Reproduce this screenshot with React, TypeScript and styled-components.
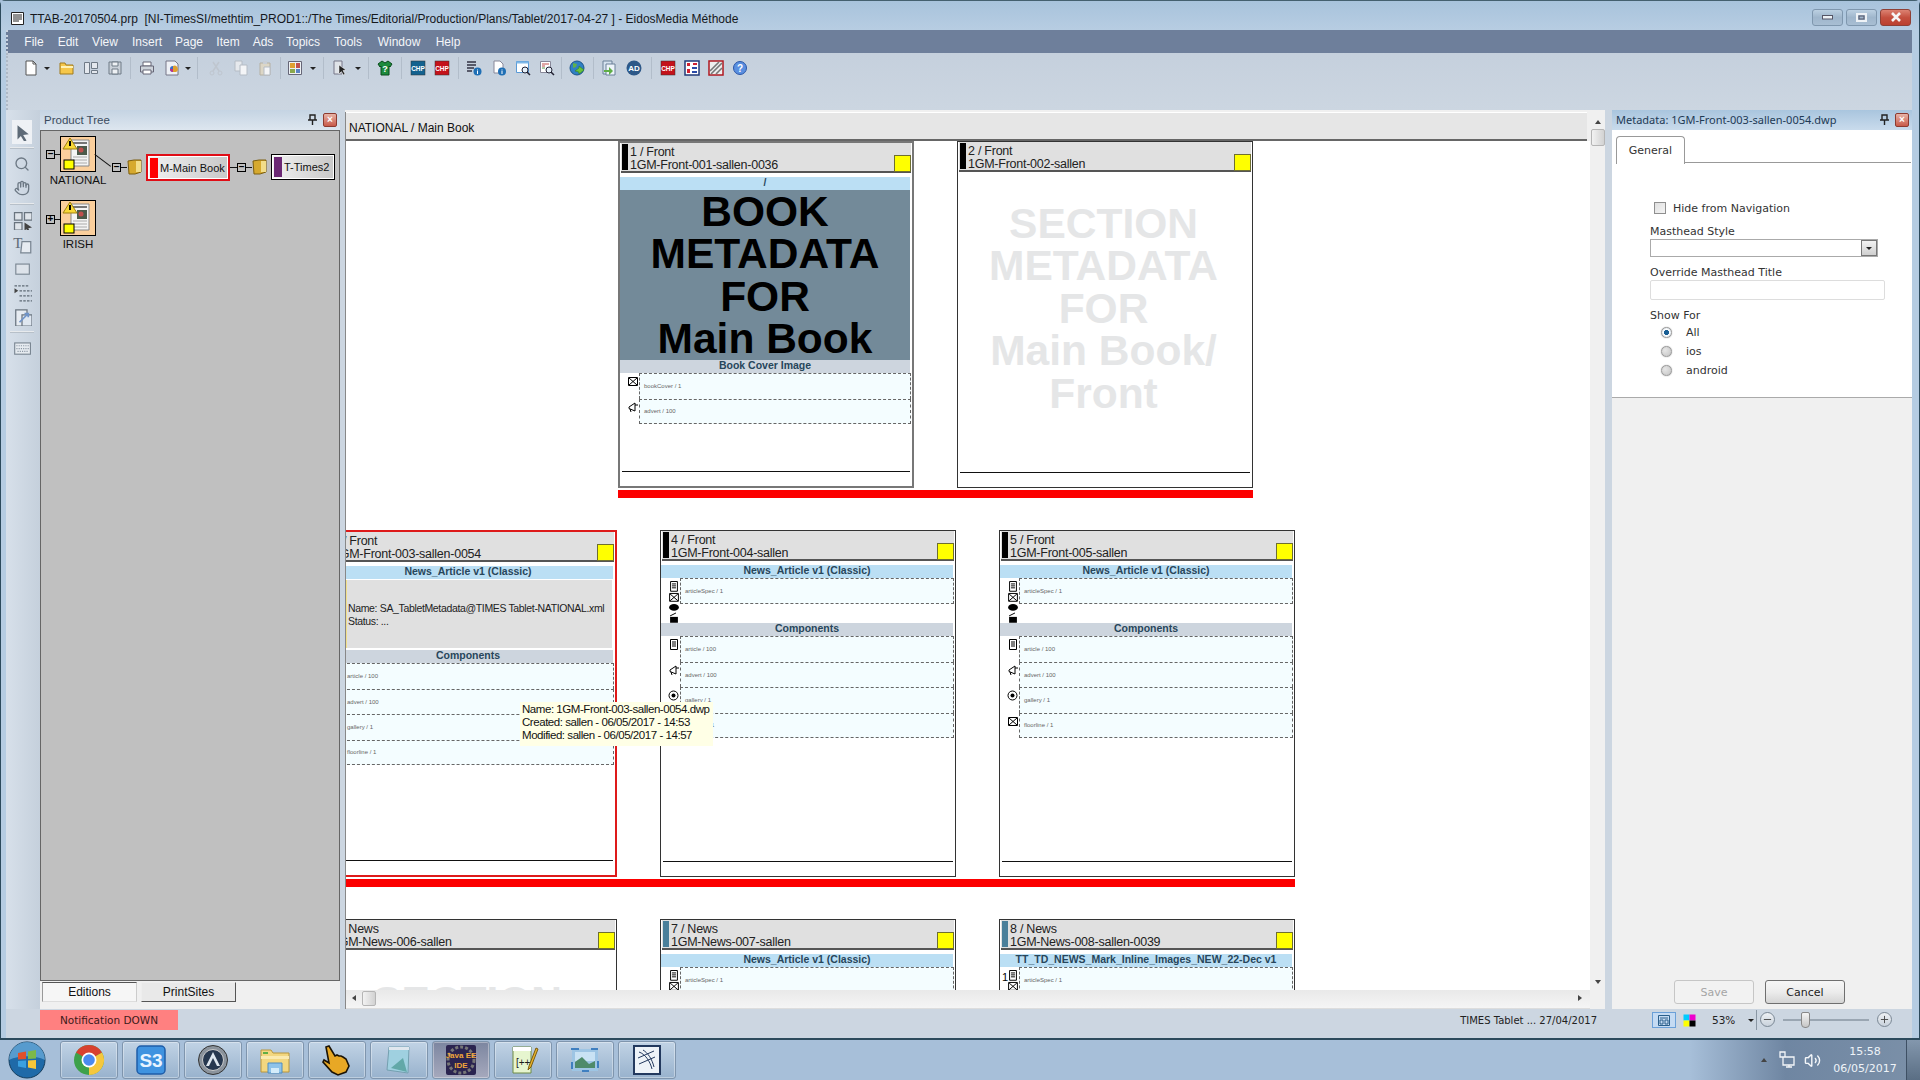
import React from 'react';
import styled, { createGlobalStyle } from 'styled-components';
import { Search, Hand, Minus, Plus, Volume2 } from 'lucide-react';

const Global = createGlobalStyle`
  html, body { margin: 0; padding: 0; width: 1920px; height: 1080px; overflow: hidden; background: #a7bfd9; }
  * { box-sizing: border-box; }
  body { font-family: "Liberation Sans", Arial, sans-serif; font-size: 12px; color: #111; }
`;

const Desktop = styled.div`width:1920px;height:1080px;display:flex;flex-direction:column;overflow:hidden;`;
const Win = styled.div`height:1040px;display:flex;flex-direction:column;background:#b5cce2;border:1px solid #2c4a5c;border-top-color:#44606f;border-bottom-width:2px;border-radius:5px 5px 0 0;`;
const TitleBar = styled.div`height:29px;flex:none;display:flex;align-items:center;padding:0 8px 0 9px;background:linear-gradient(#a8c3dc,#b7cde2);gap:5px;font-size:12px;white-space:pre;`;
const TitleText = styled.span`flex:1;color:#15181c;padding-top:7px;`;
const WinBtns = styled.div`display:flex;gap:3px;padding-top:3px;`;
const WinBtn = styled.div<{ $close?: boolean }>`width:31px;height:17px;border:1px solid ${p => (p.$close ? '#8f4036' : '#7f97ae')};border-radius:3px;display:flex;align-items:center;justify-content:center;background:${p => (p.$close ? 'linear-gradient(#dc8272,#c4503f 50%,#bb4030)' : 'linear-gradient(#bcd0e2,#9fb6cc 50%,#a8bed3)')};`;
const Inner = styled.div`flex:1;display:flex;flex-direction:column;margin:0 7px 0 5px;min-height:0;background:#ccd6e1;`;
const MenuBar = styled.div`height:23px;flex:none;background:#6e7f9b;display:flex;align-items:center;color:#f4f6f9;font-size:12px;padding-left:8px;border-left:2px dotted #c9d3df;`;
const MenuItem = styled.span<{ $w: number }>`width:${p => p.$w}px;text-align:center;`;
const ToolBar = styled.div`height:57px;flex:none;display:flex;align-items:flex-start;padding:3px 0 0 11px;border-left:2px dotted #aeb9c6;background:linear-gradient(#c5d0dd,#ccd6e1);`;
const Slot = styled.div<{ $w?: number }>`width:${p => p.$w ?? 24}px;height:24px;flex:none;display:flex;align-items:center;justify-content:center;`;
const Caret = styled.i`display:block;width:0;height:0;border:3px solid transparent;border-top:3px solid #222;border-bottom:0;`;
const VSep = styled.i`display:block;width:1px;height:22px;background:#b2bdca;`;
const Workspace = styled.div`flex:1;display:flex;min-height:0;`;
const Strip = styled.div`width:34px;flex:none;display:flex;flex-direction:column;align-items:center;padding:10px 2px 0 0;background:linear-gradient(90deg,#d7e0ea,#c5d0dc);`;
const StripBtn = styled.div<{ $h?: number; $on?: boolean }>`width:20px;height:${p => p.$h ?? 24}px;display:flex;align-items:center;justify-content:center;background:${p => (p.$on ? '#eef1f5' : 'transparent')};color:#6c7884;`;
const StripSep = styled.div`width:24px;height:2px;margin:3px 0;background:linear-gradient(#fff,#9fabb7);`;
const LeftPanel = styled.div`width:300px;flex:none;display:flex;flex-direction:column;`;
const PanelHead = styled.div`height:20px;flex:none;display:flex;align-items:center;padding:0 3px 1px 4px;gap:6px;font-size:11.5px;color:#3a4b5e;background:linear-gradient(#c5d4e3,#dde6ef);`;
const PanelTitle = styled.span`flex:1;white-space:nowrap;`;
const CloseSq = styled.div`width:14px;height:14px;border:1px solid #8d3a30;background:linear-gradient(#e7b3a7,#c95a49);border-radius:2px;color:#fff;font:bold 10px/12px "Liberation Sans",sans-serif;text-align:center;`;
const Tree = styled.div`flex:1;background:#c0c0c0;border:1px solid #666;position:relative;`;
const Expander = styled.div<{ $x: number; $y: number }>`position:absolute;left:${p => p.$x}px;top:${p => p.$y}px;width:9px;height:9px;border:1px solid #000;background:transparent;font:bold 10px/6px "Liberation Sans",sans-serif;text-align:center;color:#000;`;
const Wire = styled.div<{ $x: number; $y: number; $w: number; $r?: number }>`position:absolute;left:${p => p.$x}px;top:${p => p.$y}px;width:${p => p.$w}px;height:1px;background:#111;transform-origin:0 0;transform:rotate(${p => p.$r ?? 0}deg);`;
const Product = styled.div<{ $y: number }>`position:absolute;left:19px;top:${p => p.$y}px;width:36px;height:36px;border:1px solid #000;background:#fbcf9c;`;
const ProductLabel = styled.div<{ $y: number }>`position:absolute;left:6px;width:62px;top:${p => p.$y}px;text-align:center;font-size:11.5px;color:#111;`;
const NodeAt = styled.div<{ $x: number; $y: number }>`position:absolute;left:${p => p.$x}px;top:${p => p.$y}px;`;
const Edition = styled.div<{ $x: number; $w: number; $sel?: boolean; $c: string }>`position:absolute;left:${p => p.$x}px;top:23px;height:${p => (p.$sel ? 27 : 26)}px;width:${p => p.$w}px;border:${p => (p.$sel ? '2px solid #e00d16' : '1px solid #000')};box-shadow:inset 0 0 0 1px #fff;background:linear-gradient(90deg,#f2f2f2,#c8c8c8);display:flex;align-items:center;padding-left:2px;gap:2px;font-size:11px;white-space:nowrap;&::before{content:"";display:block;width:8px;height:20px;background:${p => p.$c};flex:none;}`;
const BottomTabs = styled.div`height:28px;flex:none;background:#f0f0f0;display:flex;gap:4px;padding:1px 0 0 2px;`;
const BTab = styled.div<{ $on?: boolean }>`width:95px;height:20px;display:flex;align-items:center;justify-content:center;font-size:12px;background:${p => (p.$on ? '#f6f6f6' : '#e9e9e9')};border:1px solid;border-color:${p => (p.$on ? '#555 #ccc #ddd #999' : '#eee #555 #555 #eee')};`;
const Center = styled.div`width:1260px;flex:none;margin-left:5px;display:flex;background:#f0f0f0;padding-top:2px;`;
const CenterCol = styled.div`flex:1;min-width:0;display:flex;flex-direction:column;border-left:1px solid #888;`;
const Crumb = styled.div`height:29px;flex:none;display:flex;align-items:center;padding:3px 0 0 3px;margin-right:3px;background:#e6e6e6;border-bottom:2px solid #666;border-top:1px solid #fff;font-size:12px;`;
const Canvas = styled.div`flex:1;min-height:0;background:#fff;overflow:hidden;position:relative;`;
const Pages = styled.div`margin-left:-25px;display:flex;flex-direction:column;`;
const Spread = styled.div<{ $ml?: number; $mb?: number }>`margin-left:${p => p.$ml ?? 0}px;margin-bottom:${p => p.$mb ?? 0}px;width:max-content;`;
const Cards = styled.div<{ $gap: number }>`display:flex;gap:${p => p.$gap}px;`;
const RedBar = styled.div`height:8px;background:#fc0000;margin-top:2px;`;
const Card = styled.div<{ $tone?: string }>`width:296px;height:347px;flex:none;display:flex;flex-direction:column;overflow:hidden;background:#fff;border:${p => (p.$tone === 'sel' ? '2px solid #de1a1a' : p.$tone === 'grey' ? '2px solid #777' : '1px solid #333')};`;
const CardHead = styled.div`height:30px;flex:none;margin:0 1px;background:#e0e0e0;border-bottom:2px solid #555;display:flex;padding:1px 0 0 1px;`;
const Stripe = styled.div<{ $c: string }>`width:6px;height:26px;flex:none;background:${p => p.$c};`;
const HeadText = styled.div`flex:1;padding:2px 0 0 2px;font-size:12.5px;letter-spacing:-.25px;line-height:13px;color:#222;white-space:nowrap;`;
const Flag = styled.div`width:17px;height:17px;flex:none;background:#ff0;border:1.5px solid #6f6f30;margin-top:11px;`;
const Band = styled.div<{ $top?: number; $tone?: string }>`height:13px;flex:none;margin:${p => p.$top ?? 4}px 2px 0 0;background:${p => (p.$tone === 'grey' ? '#cdd5de' : '#bbdff4')};color:#27465b;font-weight:bold;font-size:10.5px;line-height:10px;text-align:center;white-space:nowrap;overflow:hidden;`;
const CoverImage = styled.div`height:170px;flex:none;margin-right:2px;background:#738a99;color:#000;font-weight:bold;font-size:42.5px;line-height:42.4px;text-align:center;padding-top:1px;`;
const Placeholder = styled.div`margin:31px 3px 0 0;color:#e5e6e7;font-weight:bold;font-size:42.5px;line-height:42.4px;text-align:center;`;
const SlotRow = styled.div<{ $h?: number }>`display:flex;flex:none;height:${p => p.$h ?? 25.5}px;`;
const IconCol = styled.div`width:19px;flex:none;display:flex;flex-direction:column;align-items:center;padding:3px 0 0 6px;color:#000;position:relative;`;
const SlotBox = styled.div<{ $last?: boolean }>`flex:1;height:100%;margin-right:1px;background:#f4fdff;border:1px dashed #666;border-bottom:${p => (p.$last ? '1px dashed #666' : '0')};font-size:6px;color:#666;display:flex;align-items:center;padding-left:4px;white-space:nowrap;`;
const Split = styled.div`display:flex;height:45px;flex:none;`;
const SplitBox = styled.div`flex:1;height:26px;margin-right:1px;background:#f4fdff;border:1px dashed #666;font-size:6px;color:#666;display:flex;align-items:center;padding-left:4px;white-space:nowrap;`;
const SmallNum = styled.span`position:absolute;left:2px;top:4px;font-size:11px;`;
const Info = styled.div`height:68px;flex:none;margin:1px 3px 2px 22px;background:#e0e0e0;border-left:2px solid #f2e08a;padding:22px 0 0 1px;font-size:10.5px;letter-spacing:-.35px;line-height:13px;color:#222;white-space:nowrap;overflow:hidden;`;
const CardFoot = styled.div`margin:auto 2px 0;height:15px;border-top:1.5px solid #111;flex:none;`;
const Tip = styled.div`position:absolute;left:174px;top:561px;width:193px;height:44px;background:#ffffe6;padding:1px 0 0 2px;font-size:11.5px;letter-spacing:-.45px;line-height:13px;color:#111;white-space:nowrap;`;
const HScroll = styled.div`height:19px;flex:none;display:flex;align-items:center;padding:0 8px 2px 6px;background:linear-gradient(#e9e9e9,#f5f5f5);border-bottom:1px solid #ddd;`;
const ScrollThumb = styled.div<{ $w: number; $h: number }>`width:${p => p.$w}px;height:${p => p.$h}px;background:linear-gradient(90deg,#f2f2f2,#d2d2d2);border:1px solid #b5b5b5;border-radius:2px;flex:none;`;
const Tri = styled.i<{ $d: string }>`display:block;width:0;height:0;flex:none;border:3px solid transparent;${p => (p.$d === 'l' ? 'border-right:4px solid #444;border-left:0;' : p.$d === 'r' ? 'border-left:4px solid #444;border-right:0;' : p.$d === 'u' ? 'border-bottom:4px solid #444;border-top:0;' : 'border-top:4px solid #444;border-bottom:0;')}`;
const Spring = styled.div`flex:1;`;
const HGap = styled.div`flex:none;width:6px;`;
const VGap = styled.div`flex:none;height:5px;`;
const VScroll = styled.div`width:15px;flex:none;display:flex;flex-direction:column;align-items:center;padding:8px 0 25px;background:#f0f0f0;`;
const RightPanel = styled.div`width:300px;flex:none;margin-left:7px;display:flex;flex-direction:column;background:#f0f0f0;`;
const MetaHead = styled(PanelHead)`color:#1e3a55;font-family:"Noto Sans",sans-serif;font-size:11px;background:linear-gradient(#a9c5de,#c9dbec);`;
const Form = styled.div`height:268px;flex:none;background:#fff;border-bottom:1px solid #aaa;font-family:"DejaVu Sans",sans-serif;font-size:11px;color:#333;padding:6px 0 0 4px;display:flex;flex-direction:column;`;
const TabLine = styled.div`height:27px;flex:none;border-bottom:1px solid #999;margin-right:1px;`;
const FormTab = styled.div`width:69px;height:28px;border:1px solid #999;border-bottom:0;border-radius:4px 4px 0 0;background:#fff;display:flex;align-items:center;justify-content:center;color:#333;`;
const Fields = styled.div`padding:38px 0 0 34px;display:flex;flex-direction:column;`;
const Check = styled.div`width:12px;height:12px;border:1px solid #8f8f8f;background:linear-gradient(135deg,#e0e0e0,#f4f4f4);`;
const CheckRow = styled.div`display:flex;align-items:center;gap:7px;padding-left:4px;height:14px;margin-bottom:10px;`;
const FieldLabel = styled.div`height:14px;line-height:13px;`;
const Select = styled.div`width:228px;height:18px;border:1px solid #aaa;display:flex;justify-content:flex-end;margin-bottom:9px;`;
const SelectBtn = styled.div`width:16px;height:100%;background:linear-gradient(#f2f2f2,#cfcfcf);border:1px solid #777;display:flex;align-items:center;justify-content:center;`;
const TextInput = styled.div`width:235px;height:20px;border:1px solid #ddd;border-radius:2px;margin-bottom:9px;`;
const RadioRow = styled.div`display:flex;align-items:center;gap:14px;height:19px;padding-left:11px;`;
const Radio = styled.div<{ $on?: boolean }>`width:11px;height:11px;border-radius:50%;border:1px solid #9a9a9a;background:${p => (p.$on ? 'radial-gradient(circle,#1a5f95 0,#1a5f95 35%,#fff 45%,#cdd9e5 100%)' : 'radial-gradient(circle at 35% 35%,#e6e6e6,#c4c4c4)')};box-shadow:0 0 1px #777;`;
const FormActions = styled.div`margin-top:auto;display:flex;justify-content:flex-end;gap:11px;padding:0 67px 5px 0;`;
const Btn = styled.div<{ $off?: boolean }>`width:80px;height:24px;border:1px solid ${p => (p.$off ? '#c6c6c6' : '#6f6f6f')};border-radius:3px;display:flex;align-items:center;justify-content:center;font-family:"DejaVu Sans",sans-serif;font-size:11px;color:${p => (p.$off ? '#a5a5a5' : '#222')};background:${p => (p.$off ? '#f2f2f2' : 'linear-gradient(#f6f6f6,#ececec 50%,#d5d5d5)')};`;
const StatusBar = styled.div`height:29px;flex:none;display:flex;align-items:flex-start;padding:1px 0 0 34px;font-family:"DejaVu Sans",sans-serif;font-size:10px;color:#222;`;
const Notif = styled.div`width:138px;height:20px;background:#ff8080;display:flex;align-items:center;justify-content:center;color:#3b1a1a;font-size:10.5px;`;
const StatusText = styled.div`margin-left:auto;height:20px;display:flex;align-items:center;white-space:nowrap;`;
const ViewBtn = styled.div<{ $on?: boolean }>`width:24px;height:16px;margin:2px 0 0 ${p => (p.$on ? 55 : 1)}px;display:flex;align-items:center;justify-content:center;background:${p => (p.$on ? '#c5dbf3' : 'transparent')};border:1px solid ${p => (p.$on ? '#6ba0d8' : 'transparent')};`;
const Zoom = styled.div`margin-left:11px;width:33px;height:20px;display:flex;align-items:center;font-size:10.5px;`;
const ZoomCircle = styled.div`width:15px;height:15px;border-radius:50%;border:1px solid #7a8794;background:linear-gradient(#eef1f4,#c9d2dc);display:flex;align-items:center;justify-content:center;color:#444;flex:none;margin-top:2px;`;
const Slider = styled.div`width:86px;height:20px;margin:0 8px;display:flex;align-items:center;position:relative;&::before{content:"";display:block;width:100%;height:2px;background:#9aa6b2;}`;
const Thumb = styled.div`position:absolute;left:18px;top:2px;width:9px;height:16px;background:linear-gradient(#f4f4f4,#c6c6c6);border:1px solid #888;border-radius:2px 2px 4px 4px;`;
const Grip = styled.div`width:20px;height:20px;flex:none;`;
const CaretBox = styled.div`width:12px;height:20px;display:flex;align-items:center;justify-content:center;border-right:1px solid #8a97a4;margin-right:3px;`;
const Taskbar = styled.div`height:40px;flex:none;display:flex;align-items:center;gap:4px;padding-left:8px;background:linear-gradient(90deg,#a7bfd9 0,#a7bfd9 88%,#6f86a2 93%,#7b90a8 100%);`;
const Orb = styled.div`width:38px;height:38px;flex:none;margin-right:10px;`;
const TaskBtn = styled.div<{ $on?: boolean }>`width:58px;height:38px;flex:none;border:1px solid #7f95ad;border-radius:3px;display:flex;align-items:center;justify-content:center;background:${p => (p.$on ? 'linear-gradient(#7c86a0,#a6a9bd)' : 'linear-gradient(#c1d3e5,#98b2cd)')};box-shadow:inset 0 0 0 1px rgba(255,255,255,.35);`;
const Tray = styled.div`margin-left:auto;display:flex;align-items:center;height:100%;color:#f3f6f9;`;
const TrayIco = styled.div<{ $w: number }>`width:${p => p.$w}px;display:flex;justify-content:center;align-items:center;`;
const Clock = styled.div`width:82px;text-align:center;font-family:"DejaVu Sans",sans-serif;font-size:11px;line-height:17px;color:#eef3f8;white-space:nowrap;`;
const ShowDesk = styled.div`width:14px;height:100%;background:linear-gradient(#8397ad,#5a6e84);border-left:1px solid #3e5064;`;
const TitleGlyph = styled.div`display:flex;padding-top:6px;`;

type S = { s?: number };
const Svg = ({ s = 16, children }: S & { children: React.ReactNode }) => (
  <svg width={s} height={s} viewBox="0 0 16 16">{children}</svg>
);
const NewDoc = () => <Svg><path d="M3 1h7l3 3v11H3z" fill="#fff" stroke="#555" /><path d="M10 1v3h3" fill="none" stroke="#555" /></Svg>;
const Open = () => <Svg><path d="M1 3h5l1 2h7v9H1z" fill="#f6c74a" stroke="#a07a1c" /><path d="M2 6h12v2H2z" fill="#fff2b5" /></Svg>;
const Panes = () => <Svg><path d="M1.5 2.5h5v11h-5zM8.5 2.5h6v6h-6zM8.5 10.5h6v3h-6z" fill="#e4e8ee" stroke="#6f7a86" /></Svg>;
const Floppy = () => <Svg><path d="M2 2h12v12H2z" fill="#c9d0d8" stroke="#6f7a86" /><path d="M5 2h6v4H5zM5 9h6v5H5z" fill="#eef1f4" stroke="#6f7a86" /></Svg>;
const Printer = () => <Svg><path d="M4 2h8v4H4z" fill="#fff" stroke="#667" /><path d="M1.5 6h13v6h-13z" fill="#cdd3da" stroke="#667" /><path d="M4 10h8v4H4z" fill="#fff" stroke="#667" /></Svg>;
const Preview = () => <Svg><path d="M2 1h9l3 3v11H2z" fill="#eef1f6" stroke="#778" /><circle cx="9" cy="9" r="3" fill="#3a6cc4" /><path d="M9 6v6h3a3 3 0 0 0-3-6z" fill="#e0a030" /><path d="M6 9a3 3 0 0 0 3 3V9z" fill="#c0308a" /></Svg>;
const Cut = () => <Svg><path d="M5 2l6 9M11 2l-6 9" stroke="#bfc6cf" strokeWidth="1.5" fill="none" /><circle cx="4" cy="13" r="2" fill="none" stroke="#bfc6cf" /><circle cx="12" cy="13" r="2" fill="none" stroke="#bfc6cf" /></Svg>;
const Copy = () => <Svg><path d="M2 1h7v10H2z" fill="#e6e9ed" stroke="#b5bcc5" /><path d="M7 5h7v10H7z" fill="#f4f5f7" stroke="#b5bcc5" /></Svg>;
const Paste = () => <Svg><path d="M3 3h10v12H3z" fill="#dcd6c6" stroke="#b5b0a2" /><path d="M6 1h4v3H6z" fill="#c8ced6" /><path d="M7 7h6v8H7z" fill="#f4f5f7" stroke="#b5bcc5" /></Svg>;
const Tiles = () => <Svg><path d="M1.5 1.5h13v13h-13z" fill="#eef1f4" stroke="#667" /><path d="M3 3h5v5H3z" fill="#e0a030" /><path d="M9 3h4v5H9z" fill="#c0504d" /><path d="M3 9h5v4H3z" fill="#8aa84c" /><path d="M9 9h4v4H9z" fill="#5a82c4" /></Svg>;
const CursorDoc = () => <Svg><path d="M2 1h8v13H2z" fill="#dfe3e8" stroke="#778" /><path d="M7 5l7 5-3 .6 2 3.4-1.6 1-2-3.4L7 14z" fill="#222" stroke="#fff" strokeWidth=".5" /></Svg>;
const Shirt = () => <Svg><path d="M5 1L1 4l2 3 1-1v9h8V6l1 1 2-3-4-3-3 2z" fill="#1d8a3c" stroke="#0a4a1c" /><text x="8" y="12" fontSize="9" fontWeight="bold" fill="#fff" textAnchor="middle" fontFamily="Liberation Sans">?</text></Svg>;
const Chp = ({ c, s = 16 }: S & { c: string }) => <Svg s={s}><rect x="1" y="1" width="14" height="14" fill={c} stroke="#333" strokeWidth=".5" /><text x="8" y="10.5" fontSize="6.5" fontWeight="bold" fill="#fff" textAnchor="middle" fontFamily="Liberation Sans">CHP</text></Svg>;
const ListInfo = () => <Svg><path d="M1 2h9M1 5h9M1 8h7M1 11h5" stroke="#334" strokeWidth="1.4" /><circle cx="11.5" cy="11.5" r="4" fill="#1f6fb5" /><path d="M11.5 9.5v1M11.5 11v3" stroke="#fff" /></Svg>;
const PageInfo = () => <Svg><path d="M3 1h6l3 3v9H3z" fill="#fff" stroke="#889" /><circle cx="11" cy="11.5" r="4" fill="#1f6fb5" /><path d="M11 9.5v1M11 11v3" stroke="#fff" /></Svg>;
const WinFind = () => <Svg><path d="M1.5 1.5h12v11h-12z" fill="#fff" stroke="#5a9ad6" /><path d="M1.5 1.5h12v2h-12z" fill="#7fb8e8" /><circle cx="10" cy="10" r="3" fill="#e6f1fa" stroke="#223" /><path d="M12 12l3 3" stroke="#223" strokeWidth="1.5" /></Svg>;
const ListFind = () => <Svg><path d="M1.5 1.5h10v11h-10z" fill="#fff" stroke="#889" /><path d="M3 4h7M3 6h3" stroke="#c0504d" /><path d="M3 8h3" stroke="#5a9a4c" /><circle cx="10" cy="10" r="3" fill="#e6f1fa" stroke="#223" /><path d="M12 12l3 3" stroke="#223" strokeWidth="1.5" /></Svg>;
const Globe = () => <Svg><circle cx="8" cy="8" r="7" fill="#2f7fc4" stroke="#1c5488" /><path d="M4 3l4 1-1 3-3 1zM9 9l4-1-1 5-3 0z" fill="#5fb04a" /><path d="M6 11l4-3-0-2 5 4-5 4v-2z" fill="#69c23e" stroke="#2d7a1a" strokeWidth=".5" /></Svg>;
const DocGo = () => <Svg><path d="M2 1h9v13H2z" fill="#d6e2ef" stroke="#6a8098" /><path d="M5 4h9v11H5z" fill="#eef4fa" stroke="#6a8098" /><path d="M3 10h5V7l4 4-4 4v-3H3z" fill="#5fae46" /></Svg>;
const AdDisc = () => <Svg><circle cx="8" cy="8" r="7.5" fill="#2d5888" /><text x="8" y="11" fontSize="8" fontWeight="bold" fill="#fff" textAnchor="middle" fontFamily="Liberation Sans">AD</text></Svg>;
const GridRed = () => <Svg><rect x="1" y="1" width="14" height="14" fill="#fff" stroke="#223a78" strokeWidth="1.5" /><path d="M3 3h3v3H3zM9 3h4v2H9zM3 9h3v4H3z" fill="#d02030" /><path d="M8 7h5v2H8zM8 11h5v2H8z" fill="#2b4aa8" /></Svg>;
const Hatch = () => <Svg><rect x="1" y="1" width="14" height="14" fill="#eee" stroke="#b01820" strokeWidth="1.5" /><path d="M2 11l9-9M3 14l11-11M8 14l6-6" stroke="#777" strokeWidth="1.6" /></Svg>;
const Help = () => <Svg><circle cx="8" cy="8" r="6.5" fill="#5a8fe0" stroke="#2a56a8" /><text x="8" y="11.5" fontSize="10" fontWeight="bold" fill="#fff" textAnchor="middle" fontFamily="Liberation Sans">?</text></Svg>;

const Arrow = () => <Svg s={18}><path d="M4 2l10 8-5 .6 3 5-2 1-3-5-3 3z" fill="#5d6a77" /></Svg>;
const MultiSel = () => <Svg s={20}><path d="M2 2h6v6H2zM10 2h6v6h-6zM2 10h6v6H2z" fill="#dfe4ea" stroke="#69747f" /><path d="M10 10l6 4-3 .5 1.5 3-1.5.7-1.5-3-1.5 1.5z" fill="#444" /></Svg>;
const TextFrame = () => <Svg s={20}><path d="M8 6h7v9H7z" fill="#e6ebf1" stroke="#7a8692" /><text x="1" y="11" fontSize="12" fontFamily="Liberation Serif" fill="#5f6a75">T</text></Svg>;
const RectBox = () => <Svg s={18}><rect x="2.5" y="4.5" width="12" height="9" fill="#dde3ea" stroke="#7a8692" /></Svg>;
const ListFlow = () => <Svg s={20}><path d="M2 3h12M6 7h10M6 11h10M6 15h10" stroke="#5f6a75" strokeDasharray="2 1" /><path d="M2 5l3 2-3 2z" fill="#444" /></Svg>;
const Link2 = () => <Svg s={20}><path d="M3 3h9v13H3z" fill="#e7ecf2" stroke="#69747f" /><path d="M8 7h8v9H8z" fill="#dfe7f0" stroke="#69747f" /><path d="M6 13l7-7M10 6h3v3" stroke="#6f93c8" strokeWidth="1.4" fill="none" /></Svg>;
const Keys = () => <Svg s={18}><rect x="1.5" y="3.5" width="14" height="10" fill="#e6ebf0" stroke="#7a8692" /><path d="M3 6h11M3 8.5h11M4 11h9" stroke="#8a96a2" strokeDasharray="1 1" /></Svg>;

const ProdIcon = () => (
  <svg width="34" height="34" viewBox="0 0 34 34">
    <path d="M10 3h18v26H10z" fill="#f4f4f4" stroke="#888" />
    <path d="M12 5h14v2H12z" fill="#777" />
    <rect x="16" y="9" width="10" height="9" fill="#4c5a4a" />
    <circle cx="20" cy="13" r="2.5" fill="#c0504d" />
    <path d="M12 20h14M12 23h14M12 26h14" stroke="#aaa" />
    <path d="M2 12L9 1l7 11z" fill="#f8d838" stroke="#a08010" />
    <rect x="8" y="4" width="2" height="5" fill="#000" />
    <rect x="3" y="23" width="10" height="9" fill="#ff0" stroke="#000" />
  </svg>
);
const Book = () => (
  <svg width="15" height="16" viewBox="0 0 15 16">
    <path d="M1 2l6-1h7v12l-6 2H2z" fill="#d6a92e" stroke="#7c5e10" />
    <path d="M9 2h5v11H9z" fill="#f2dd8a" />
  </svg>
);

const DocG = () => <svg width="10" height="11" viewBox="0 0 10 11"><path d="M1.5.5h7v10h-7zM3 3h4M3 5h4M3 7h4" fill="none" stroke="#000" /></svg>;
const BoxX = () => <svg width="10" height="11" viewBox="0 0 10 11"><path d="M.5 1.5h9v8h-9zM1 2l8 7M9 2L1 9" fill="none" stroke="#000" /></svg>;
const Bubble = () => <svg width="10" height="10" viewBox="0 0 10 10"><ellipse cx="5" cy="4.5" rx="5" ry="3.5" fill="#000" /></svg>;
const Clap = () => <svg width="10" height="11" viewBox="0 0 10 11"><path d="M1 5h8v6H1z" fill="#000" /><path d="M1 4l6-3" stroke="#000" /></svg>;
const Horn = () => <svg width="10" height="11" viewBox="0 0 10 11"><path d="M1 5l6-4v8L1 6.5zM7 3h3M2 7l1 3" fill="#fff" stroke="#000" /></svg>;
const Gal = () => <svg width="11" height="11" viewBox="0 0 11 11"><circle cx="5.5" cy="5.5" r="4.5" fill="none" stroke="#000" /><circle cx="5.5" cy="5.5" r="2" fill="#000" /></svg>;

const Slots = ({ items }: { items: [React.ReactNode, string][] }) => (
  <>
    {items.map(([ico, label], i) => (
      <SlotRow key={label}>
        <IconCol>{ico}</IconCol>
        <SlotBox $last={i === items.length - 1}>{label}</SlotBox>
      </SlotRow>
    ))}
  </>
);
const comps: [React.ReactNode, string][] = [
  [<DocG />, 'article / 100'],
  [<Horn />, 'advert / 100'],
  [<Gal />, 'gallery / 1'],
  [<BoxX />, 'floorline / 1'],
];
const Head = ({ c, a, b }: { c: string; a: string; b: string }) => (
  <CardHead>
    <Stripe $c={c} />
    <HeadText>{a}<br />{b}</HeadText>
    <Flag />
  </CardHead>
);
const ArticleTop = ({ num }: { num?: boolean }) => (
  <Split>
    <IconCol>
      {num && <SmallNum>1</SmallNum>}
      <DocG /><BoxX /><Bubble /><Clap />
    </IconCol>
    <SplitBox>articleSpec / 1</SplitBox>
  </Split>
);
const ArticleCard = ({ a, b }: { a: string; b: string }) => (
  <Card>
    <Head c="#000" a={a} b={b} />
    <Band>News_Article v1 (Classic)</Band>
    <ArticleTop />
    <Band $top={0} $tone="grey">Components</Band>
    <Slots items={comps} />
    <CardFoot />
  </Card>
);

const toolbar: React.ReactNode[] = [
  <Slot key="a"><NewDoc /></Slot>, <Slot key="b" $w={8}><Caret /></Slot>, <Slot key="c" $w={4} />,
  <Slot key="d"><Open /></Slot>, <Slot key="e"><Panes /></Slot>, <Slot key="f"><Floppy /></Slot>,
  <Slot key="g" $w={7}><VSep /></Slot>, <Slot key="h" $w={26}><Printer /></Slot>, <Slot key="i"><Preview /></Slot>,
  <Slot key="j" $w={8}><Caret /></Slot>, <Slot key="k" $w={11}><VSep /></Slot>, <Slot key="l" $w={25}><Cut /></Slot>,
  <Slot key="m" $w={25}><Copy /></Slot>, <Slot key="n"><Paste /></Slot>, <Slot key="o" $w={6}><VSep /></Slot>,
  <Slot key="p"><Tiles /></Slot>, <Slot key="q" $w={12}><Caret /></Slot>, <Slot key="r" $w={9}><VSep /></Slot>,
  <Slot key="s"><CursorDoc /></Slot>, <Slot key="t" $w={12}><Caret /></Slot>, <Slot key="u" $w={9}><VSep /></Slot>,
  <Slot key="v"><Shirt /></Slot>, <Slot key="w" $w={9}><VSep /></Slot>, <Slot key="x"><Chp c="#13628f" /></Slot>,
  <Slot key="y"><Chp c="#c4121a" /></Slot>, <Slot key="z" $w={8}><VSep /></Slot>, <Slot key="aa"><ListInfo /></Slot>,
  <Slot key="ab" $w={25}><PageInfo /></Slot>, <Slot key="ac"><WinFind /></Slot>, <Slot key="ad" $w={23}><ListFind /></Slot>,
  <Slot key="ae" $w={7}><VSep /></Slot>, <Slot key="af"><Globe /></Slot>, <Slot key="ag" $w={8}><VSep /></Slot>,
  <Slot key="ah"><DocGo /></Slot>, <Slot key="ai" $w={25}><AdDisc /></Slot>, <Slot key="aj" $w={10}><VSep /></Slot>,
  <Slot key="ak"><Chp c="#c4121a" /></Slot>, <Slot key="al"><GridRed /></Slot>, <Slot key="am"><Hatch /></Slot>,
  <Slot key="an"><Help /></Slot>,
];
const menus: [string, number][] = [['File', 36], ['Edit', 32], ['View', 42], ['Insert', 42], ['Page', 42], ['Item', 36], ['Ads', 34], ['Topics', 46], ['Tools', 44], ['Window', 58], ['Help', 40]];

const ChromeIcon = () => (
  <svg width="32" height="32" viewBox="0 0 32 32">
    <circle cx="16" cy="16" r="15" fill="#3da14a" />
    <path d="M16 16L3 8.5A15 15 0 0 1 29 8.5z" fill="#d8412f" />
    <path d="M16 16L29 8.5A15 15 0 0 1 16 31z" fill="#f5c73d" />
    <circle cx="16" cy="16" r="7.5" fill="#fff" />
    <circle cx="16" cy="16" r="5.8" fill="#4a8af0" />
  </svg>
);
const S3Icon = () => (
  <svg width="30" height="30" viewBox="0 0 30 30"><rect x="1" y="1" width="28" height="28" rx="4" fill="#3f93e0" stroke="#1f5da8" strokeWidth="1.5" /><text x="15" y="22" fontSize="19" fontWeight="bold" fill="#e8f4ff" textAnchor="middle" fontFamily="Liberation Sans">S3</text></svg>
);
const AIcon = () => (
  <svg width="32" height="32" viewBox="0 0 32 32"><circle cx="16" cy="16" r="14.5" fill="#8b939c" stroke="#333" /><circle cx="16" cy="16" r="10.5" fill="#27384f" stroke="#ccc" /><path d="M16 8l7 14h-3l-4-8-4 8H9z" fill="#dfe7ef" /></svg>
);
const FolderIcon = () => (
  <svg width="32" height="32" viewBox="0 0 32 32"><path d="M2 6h10l2 3h16v19H2z" fill="#f3d780" stroke="#b9963c" /><path d="M4 8h5v2H4z" fill="#5fae46" /><path d="M2 12h28v3H2z" fill="#fbeab0" /><path d="M9 19h14v10H9z" fill="#8ec3ea" stroke="#4f8dc0" /><path d="M12 24h8v5h-8z" fill="#d4ecfa" /></svg>
);
const HandIcon = () => (
  <svg width="32" height="32" viewBox="0 0 32 32"><path d="M5 3l3-1 6 10 2-1 2 1 2 0 2 1 3 2 3 7-3 6-8 3-6-3-9-10 1-2 5 3z" fill="#e8a825" stroke="#1b1306" strokeWidth="1.6" /></svg>
);
const NoteIcon = () => (
  <svg width="32" height="32" viewBox="0 0 32 32"><path d="M6 3h20l-1 26-21-3z" fill="#9fd0e0" stroke="#74a0b0" /><path d="M6 3h20v3H6z" fill="#dfe7ee" /><path d="M8 24l12-10 4 14z" fill="#62a8a8" /></svg>
);
const JavaIcon = () => (
  <svg width="34" height="34" viewBox="0 0 34 34"><rect x="2" y="2" width="30" height="30" rx="2" fill="#2b2450" /><circle cx="17" cy="17" r="13" fill="none" stroke="#777" strokeWidth="3" strokeDasharray="3 2" /><text x="17" y="15" fontSize="8" fontWeight="bold" fill="#f0a63a" textAnchor="middle" fontFamily="Liberation Sans">Java EE</text><text x="17" y="25" fontSize="8" fontWeight="bold" fill="#f0a63a" textAnchor="middle" fontFamily="Liberation Sans">IDE</text></svg>
);
const NppIcon = () => (
  <svg width="32" height="32" viewBox="0 0 32 32"><path d="M6 3h18v26H6z" fill="#e6f5cf" stroke="#6f8a46" /><path d="M6 3h18v4H6z" fill="#fff" /><text x="9" y="22" fontSize="10" fill="#1a1a1a" fontFamily="Liberation Sans">[++</text><path d="M22 22L29 4l2 1-7 18-3 3z" fill="#e8b52c" stroke="#7a5a10" /></svg>
);
const PhotoIcon = () => (
  <svg width="32" height="32" viewBox="0 0 32 32"><rect x="3" y="5" width="26" height="22" fill="#9ec5e4" stroke="#3f7fc0" strokeWidth="2" strokeDasharray="7 12" /><path d="M6 8h20v9H6z" fill="#c9e2f4" /><path d="M6 24v-6l7-5 7 7 6-3v7z" fill="#4e8a6a" /></svg>
);
const AppIcon = () => (
  <svg width="30" height="32" viewBox="0 0 30 32"><rect x="2" y="2" width="26" height="28" fill="#eef3f8" stroke="#23395e" strokeWidth="2" /><path d="M7 8c6 2 11 9 13 17M11 6c5 3 9 9 11 17M6 14l16-7M7 20l16-7" stroke="#23395e" fill="none" /></svg>
);

export default function App() {
  return (
    <>
      <Global />
      <Desktop>
        <Win>
          <TitleBar>
            <TitleGlyph><svg width="15" height="15" viewBox="0 0 15 15"><path d="M1.5 1.5h12v12h-12z" fill="#fff" stroke="#222" /><path d="M3 4h9M3 6h9M3 8h9M3 10h6" stroke="#222" /></svg></TitleGlyph>
            <TitleText>TTAB-20170504.prp  [NI-TimesSI/methtim_PROD1::/The Times/Editorial/Production/Plans/Tablet/2017-04-27 ] - EidosMedia Méthode</TitleText>
            <WinBtns>
              <WinBtn><svg width="12" height="6" viewBox="0 0 12 6"><rect x=".5" y="1.5" width="10" height="3.5" fill="#eef2f6" stroke="#556" /></svg></WinBtn>
              <WinBtn><svg width="11" height="9" viewBox="0 0 11 9"><rect x="1" y="1" width="9" height="7" fill="none" stroke="#eef2f6" strokeWidth="2" /><rect x="3" y="3" width="5" height="3" fill="none" stroke="#556" /></svg></WinBtn>
              <WinBtn $close><svg width="12" height="10" viewBox="0 0 12 10"><path d="M2 1l8 8M10 1l-8 8" stroke="#f6f6f6" strokeWidth="2.6" /></svg></WinBtn>
            </WinBtns>
          </TitleBar>
          <Inner>
            <MenuBar>{menus.map(([m, w]) => <MenuItem key={m} $w={w}>{m}</MenuItem>)}</MenuBar>
            <ToolBar>{toolbar}</ToolBar>
            <Workspace>
              <Strip>
                <StripBtn $on><Arrow /></StripBtn>
                <StripSep />
                <StripBtn><Search size={16} /></StripBtn>
                <StripBtn><Hand size={16} /></StripBtn>
                <StripSep />
                <StripBtn><MultiSel /></StripBtn>
                <StripBtn><TextFrame /></StripBtn>
                <StripBtn><RectBox /></StripBtn>
                <StripBtn><ListFlow /></StripBtn>
                <StripBtn><Link2 /></StripBtn>
                <StripSep />
                <StripBtn><Keys /></StripBtn>
              </Strip>
              <LeftPanel>
                <PanelHead>
                  <PanelTitle>Product Tree</PanelTitle>
                  <svg width="9" height="11" viewBox="0 0 9 11"><path d="M2 1h5v5H2zM0 6h9M4.5 6v5" fill="none" stroke="#222" strokeWidth="1.4" /></svg>
                  <CloseSq>×</CloseSq>
                </PanelHead>
                <Tree>
                  <Expander $x={5} $y={19}>–</Expander>
                  <Wire $x={14} $y={23} $w={6} />
                  <Product $y={5}><ProdIcon /></Product>
                  <ProductLabel $y={43}>NATIONAL</ProductLabel>
                  <Wire $x={54} $y={23} $w={20} $r={37} />
                  <Expander $x={71} $y={32}>–</Expander>
                  <Wire $x={80} $y={36} $w={6} />
                  <NodeAt $x={86} $y={28}><Book /></NodeAt>
                  <Edition $x={105} $w={84} $sel $c="#f00">M-Main Book</Edition>
                  <Wire $x={189} $y={36} $w={7} />
                  <Expander $x={196} $y={32}>–</Expander>
                  <Wire $x={205} $y={36} $w={6} />
                  <NodeAt $x={211} $y={28}><Book /></NodeAt>
                  <Edition $x={230} $w={64} $c="#6b2874">T-Times2</Edition>
                  <Expander $x={5} $y={84}>+</Expander>
                  <Wire $x={14} $y={88} $w={5} />
                  <Product $y={69}><ProdIcon /></Product>
                  <ProductLabel $y={107}>IRISH</ProductLabel>
                </Tree>
                <BottomTabs>
                  <BTab $on>Editions</BTab>
                  <BTab>PrintSites</BTab>
                </BottomTabs>
              </LeftPanel>
              <Center>
                <CenterCol>
                  <Crumb>NATIONAL / Main Book</Crumb>
                  <Canvas>
                    <Pages>
                      <Spread $ml={297} $mb={32}>
                        <Cards $gap={43}>
                          <Card $tone="grey">
                            <Head c="#000" a="1 / Front" b="1GM-Front-001-sallen-0036" />
                            <Band>/</Band>
                            <CoverImage>BOOK<br />METADATA<br />FOR<br />Main Book</CoverImage>
                            <Band $top={0} $tone="grey">Book Cover Image</Band>
                            <Slots items={[[<BoxX />, 'bookCover / 1'], [<Horn />, 'advert / 100']]} />
                            <CardFoot />
                          </Card>
                          <Card>
                            <Head c="#000" a="2 / Front" b="1GM-Front-002-sallen" />
                            <Placeholder>SECTION<br />METADATA<br />FOR<br />Main Book/<br />Front</Placeholder>
                            <CardFoot />
                          </Card>
                        </Cards>
                        <RedBar />
                      </Spread>
                      <Spread $mb={32}>
                        <Cards $gap={43}>
                          <Card $tone="sel">
                            <Head c="#000" a="3 / Front" b="1GM-Front-003-sallen-0054" />
                            <Band>News_Article v1 (Classic)</Band>
                            <Info>Name: SA_TabletMetadata@TIMES Tablet-NATIONAL.xml<br />Status: ...</Info>
                            <Band $top={0} $tone="grey">Components</Band>
                            <Slots items={comps} />
                            <CardFoot />
                          </Card>
                          <ArticleCard a="4 / Front" b="1GM-Front-004-sallen" />
                          <ArticleCard a="5 / Front" b="1GM-Front-005-sallen" />
                        </Cards>
                        <RedBar />
                      </Spread>
                      <Spread>
                        <Cards $gap={43}>
                          <Card>
                            <Head c="#4a7f9a" a="6 / News" b="1GM-News-006-sallen" />
                            <Placeholder>SECTION</Placeholder>
                          </Card>
                          <Card>
                            <Head c="#4a7f9a" a="7 / News" b="1GM-News-007-sallen" />
                            <Band>News_Article v1 (Classic)</Band>
                            <ArticleTop />
                          </Card>
                          <Card>
                            <Head c="#4a7f9a" a="8 / News" b="1GM-News-008-sallen-0039" />
                            <Band>TT_TD_NEWS_Mark_Inline_Images_NEW_22-Dec v1</Band>
                            <ArticleTop num />
                          </Card>
                        </Cards>
                      </Spread>
                    </Pages>
                    <Tip>Name: 1GM-Front-003-sallen-0054.dwp<br />Created: sallen - 06/05/2017 - 14:53<br />Modified: sallen - 06/05/2017 - 14:57</Tip>
                  </Canvas>
                  <HScroll>
                    <Tri $d="l" />
                    <HGap />
                    <ScrollThumb $w={14} $h={15} />
                    <Spring />
                    <Tri $d="r" />
                  </HScroll>
                </CenterCol>
                <VScroll>
                  <Tri $d="u" />
                  <VGap />
                  <ScrollThumb $w={14} $h={17} />
                  <Spring />
                  <Tri $d="d" />
                </VScroll>
              </Center>
              <RightPanel>
                <MetaHead>
                  <PanelTitle>Metadata: 1GM-Front-003-sallen-0054.dwp</PanelTitle>
                  <svg width="9" height="11" viewBox="0 0 9 11"><path d="M2 1h5v5H2zM0 6h9M4.5 6v5" fill="none" stroke="#222" strokeWidth="1.4" /></svg>
                  <CloseSq>×</CloseSq>
                </MetaHead>
                <Form>
                  <TabLine><FormTab>General</FormTab></TabLine>
                  <Fields>
                    <CheckRow><Check /> Hide from Navigation</CheckRow>
                    <FieldLabel>Masthead Style</FieldLabel>
                    <Select><SelectBtn><Caret /></SelectBtn></Select>
                    <FieldLabel>Override Masthead Title</FieldLabel>
                    <TextInput />
                    <FieldLabel>Show For</FieldLabel>
                    <RadioRow><Radio $on /> All</RadioRow>
                    <RadioRow><Radio /> ios</RadioRow>
                    <RadioRow><Radio /> android</RadioRow>
                  </Fields>
                </Form>
                <FormActions>
                  <Btn $off>Save</Btn>
                  <Btn>Cancel</Btn>
                </FormActions>
              </RightPanel>
            </Workspace>
            <StatusBar>
              <Notif>Notification DOWN</Notif>
              <StatusText>TIMES Tablet ... 27/04/2017</StatusText>
              <ViewBtn $on><svg width="14" height="13" viewBox="0 0 14 13"><path d="M1.5 1.5h11v10h-11zM3 4h8M3 6h3v4H3zM8 6h3v4H8z" fill="none" stroke="#2a5f8a" /></svg></ViewBtn>
              <ViewBtn><svg width="13" height="13" viewBox="0 0 13 13"><rect x=".5" y=".5" width="6" height="6" fill="#0cf" /><rect x="6.5" y=".5" width="6" height="6" fill="#e0c" /><rect x=".5" y="6.5" width="6" height="6" fill="#ff0" /><rect x="6.5" y="6.5" width="6" height="6" fill="#000" /></svg></ViewBtn>
              <Zoom>53%</Zoom>
              <CaretBox><Caret /></CaretBox>
              <ZoomCircle><Minus size={11} /></ZoomCircle>
              <Slider><Thumb /></Slider>
              <ZoomCircle><Plus size={11} /></ZoomCircle>
              <Grip />
            </StatusBar>
          </Inner>
        </Win>
        <Taskbar>
          <Orb>
            <svg width="38" height="38" viewBox="0 0 38 38">
              <circle cx="19" cy="19" r="18" fill="#1f6aa8" stroke="#163e5e" />
              <path d="M1 19a18 18 0 0 1 36 0c-10-5-26-5-36 0z" fill="#6fb0de" opacity=".7" />
              <path d="M10 12l8-1.5v7.5l-8 .5z" fill="#e0502a" />
              <path d="M20 10.5l8-1.5v8.5l-8 .5z" fill="#7cb84a" />
              <path d="M10 20l8-.5v7.5l-8-1.5z" fill="#3aa0e0" />
              <path d="M20 19.5l8-.5v9l-8-1.5z" fill="#f6c63a" />
            </svg>
          </Orb>
          <TaskBtn><ChromeIcon /></TaskBtn>
          <TaskBtn><S3Icon /></TaskBtn>
          <TaskBtn><AIcon /></TaskBtn>
          <TaskBtn><FolderIcon /></TaskBtn>
          <TaskBtn><HandIcon /></TaskBtn>
          <TaskBtn><NoteIcon /></TaskBtn>
          <TaskBtn $on><JavaIcon /></TaskBtn>
          <TaskBtn><NppIcon /></TaskBtn>
          <TaskBtn><PhotoIcon /></TaskBtn>
          <TaskBtn><AppIcon /></TaskBtn>
          <Tray>
            <TrayIco $w={24}><Tri $d="u" /></TrayIco>
            <TrayIco $w={24}><svg width="18" height="18" viewBox="0 0 18 18"><path d="M4 6h11v8H4zM7 16h6M10 14v2M1 1h5v5H1z" fill="none" stroke="#f3f6f9" strokeWidth="1.3" /></svg></TrayIco>
            <TrayIco $w={24}><Volume2 size={17} /></TrayIco>
            <Clock>15:58<br />06/05/2017</Clock>
            <ShowDesk />
          </Tray>
        </Taskbar>
      </Desktop>
    </>
  );
}
